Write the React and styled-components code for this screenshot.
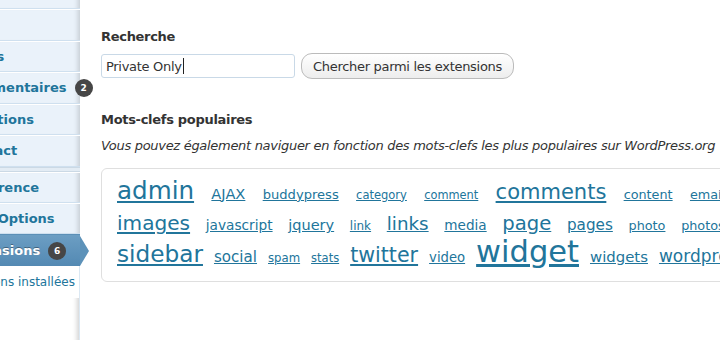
import React from "react";
import styled, { createGlobalStyle, css } from "styled-components";

const GlobalStyle = createGlobalStyle`
  html, body { margin: 0; padding: 0; background: #fff; overflow: hidden; }
  body { font-family: "DejaVu Sans", "Liberation Sans", sans-serif; font-size: 13px; color: #333; }
`;

const Page = styled.div`
  display: flex;
  align-items: flex-start;
  width: 1400px;
  height: 340px;
  margin-left: -70px;
`;

const Sidebar = styled.nav`
  flex: 0 0 150px;
  width: 150px;
  height: 400px;
  margin-top: -22.1px;
  background: #fff;
  box-shadow: inset -6px 0 5px -4px rgba(0, 0, 0, 0.18);
  border-right: 1px solid #dbe8f3;
  box-sizing: border-box;
`;

const MenuList = styled.ul`
  list-style: none;
  margin: 0;
  padding: 0;
`;

const MenuItem = styled.li`
  position: relative;
  height: 29.44px;
  display: flex;
  align-items: center;
  padding-left: 30.5px;
  white-space: nowrap;
  font-weight: bold;
  font-size: 13px;
  color: #21759b;
  background: #eaf2fa;
  border-top: 1px solid #fff;
  border-bottom: 1px solid #cfe0ef;
  box-shadow: inset -6px 0 5px -4px rgba(0, 0, 0, 0.16);
  margin-right: -1px;

  ${(p) =>
    p.$current &&
    css`
      height: 31px;
      color: #fff;
      text-shadow: 0 -1px 0 rgba(0, 0, 0, 0.35);
      background: linear-gradient(#6c9ec3, #5389b3);
      border-top: 1px solid #5c90b7;
      border-bottom: 0;
      box-shadow: none;
      &::after {
        content: "";
        position: absolute;
        left: 100%;
        top: 1px;
        border-style: solid;
        border-width: 15px 0 15px 9px;
        border-color: transparent transparent transparent #5d92b9;
      }
    `}
`;

const Separator = styled.li`
  height: 3px;
  background: #e3ecf4;
  border-top: 1px solid #cbd9e5;
  border-bottom: 1px solid #cbd9e5;
  margin-right: -1px;
`;

const Badge = styled.span`
  display: inline-block;
  margin-left: 8px;
  min-width: 18px;
  height: 18px;
  border-radius: 9px;
  background: #464646;
  color: #fff;
  font-size: 9px;
  font-weight: bold;
  line-height: 18px;
  text-align: center;
  text-shadow: none;
`;

const SubMenu = styled.ul`
  list-style: none;
  margin: 0;
  padding: 6px 0;
  background: #fff;
`;

const SubItem = styled.li`
  padding-left: 19px;
  font-size: 12px;
  line-height: 20px;
  color: #21759b;
  white-space: nowrap;
`;

const Content = styled.main`
  flex: 1;
  margin-left: 21px;
  padding-top: 28px;
  letter-spacing: -0.3px;
`;

const Heading = styled.h4`
  margin: 0;
  font-size: 13px;
  font-weight: bold;
  line-height: 18px;
  color: #333;
  margin-top: ${(p) => p.$top || 0}px;
`;

const SearchRow = styled.div`
  display: flex;
  align-items: center;
  gap: 6px;
  margin-top: 7px;
  height: 26px;
`;

const SearchField = styled.div`
  box-sizing: border-box;
  width: 194px;
  height: 24px;
  border: 1px solid #c9d9e7;
  border-radius: 3px;
  padding: 0 4px;
  display: flex;
  align-items: center;
  font-size: 13px;
  color: #333;
  background: #fff;
`;

const Caret = styled.span`
  display: inline-block;
  width: 1px;
  height: 16px;
  background: #222;
  margin-left: 1px;
`;

const Button = styled.button`
  box-sizing: border-box;
  height: 26px;
  padding: 0 11px;
  border: 1px solid #bbb;
  border-radius: 11px;
  background: linear-gradient(#ffffff, #ededed);
  font-family: "DejaVu Sans", "Liberation Sans", sans-serif;
  font-size: 13px;
  letter-spacing: -0.3px;
  color: #333;
  cursor: pointer;
`;

const Description = styled.p`
  margin: 8px 0 0;
  font-style: italic;
  line-height: 18px;
  color: #333;
`;

const TagBox = styled.div`
  margin-top: 13px;
  border: 1px solid #dfdfdf;
  border-radius: 6px;
  padding: 9.5px 15px 8px;
  width: 1100px;
  letter-spacing: normal;
`;

const TagRow = styled.div`
  height: 31.5px;
  line-height: 31.5px;
  white-space: nowrap;
  & > a + a {
    margin-left: ${(p) => p.$gap}px;
  }
`;

const Tag = styled.a`
  line-height: 0;
  color: #21759b;
  text-decoration: underline;
  font-size: ${(p) => p.$size}px;
`;

const rows = [
  {
    gap: 17.3,
    tags: [
      ["admin", 24.6],
      ["AJAX", 14.6],
      ["buddypress", 13.1],
      ["category", 11.5],
      ["comment", 11.4],
      ["comments", 21],
      ["content", 12.8],
      ["email", 12.8],
      ["facebook", 13],
      ["feed", 11],
      ["gallery", 14],
      ["google", 12],
      ["image", 12],
    ],
  },
  {
    gap: 15.7,
    tags: [
      ["images", 20.1],
      ["javascript", 13.7],
      ["jquery", 14.5],
      ["link", 12],
      ["links", 18.3],
      ["media", 13.6],
      ["page", 19.6],
      ["pages", 15.2],
      ["photo", 12.8],
      ["photos", 12.8],
      ["plugin", 15],
      ["post", 18],
      ["posts", 20],
      ["rss", 13],
      ["seo", 13],
    ],
  },
  {
    gap: 11,
    tags: [
      ["sidebar", 23.2],
      ["social", 15.1],
      ["spam", 11.7],
      ["stats", 11.5],
      ["twitter", 20.6],
      ["video", 13.2],
      ["widget", 30.5],
      ["widgets", 14.9],
      ["wordpress", 17],
      ["youtube", 14],
    ],
  },
];

const menu = [
  { label: "Médias" },
  { label: "Liens" },
  { label: "Pages" },
  { label: "Commentaires", badge: 2 },
  { label: "Questions" },
  { label: "Contact" },
  { sep: true },
  { label: "Apparence" },
  { label: "Blog Options" },
  { label: "Extensions", badge: 6, current: true },
];

export default function App() {
  return (
    <>
      <GlobalStyle />
      <Page>
        <Sidebar>
          <MenuList>
            {menu.map((m, i) =>
              m.sep ? (
                <Separator key={i} />
              ) : (
                <MenuItem key={i} $current={m.current}>
                  {m.label}
                  {m.badge ? <Badge>{m.badge}</Badge> : null}
                </MenuItem>
              )
            )}
          </MenuList>
          <SubMenu>
            <SubItem>Extensions installées</SubItem>
          </SubMenu>
        </Sidebar>
        <Content>
          <Heading>Recherche</Heading>
          <SearchRow>
            <SearchField>
              Private Only
              <Caret />
            </SearchField>
            <Button type="button">Chercher parmi les extensions</Button>
          </SearchRow>
          <Heading $top={32}>Mots-clefs populaires</Heading>
          <Description>
            Vous pouvez également naviguer en fonction des mots-clefs les plus populaires sur WordPress.org
          </Description>
          <TagBox>
            {rows.map((r, i) => (
              <TagRow key={i} $gap={r.gap}>
                {r.tags.map(([t, s]) => (
                  <Tag key={t} href="#" $size={s}>
                    {t}
                  </Tag>
                ))}
              </TagRow>
            ))}
          </TagBox>
        </Content>
      </Page>
    </>
  );
}
